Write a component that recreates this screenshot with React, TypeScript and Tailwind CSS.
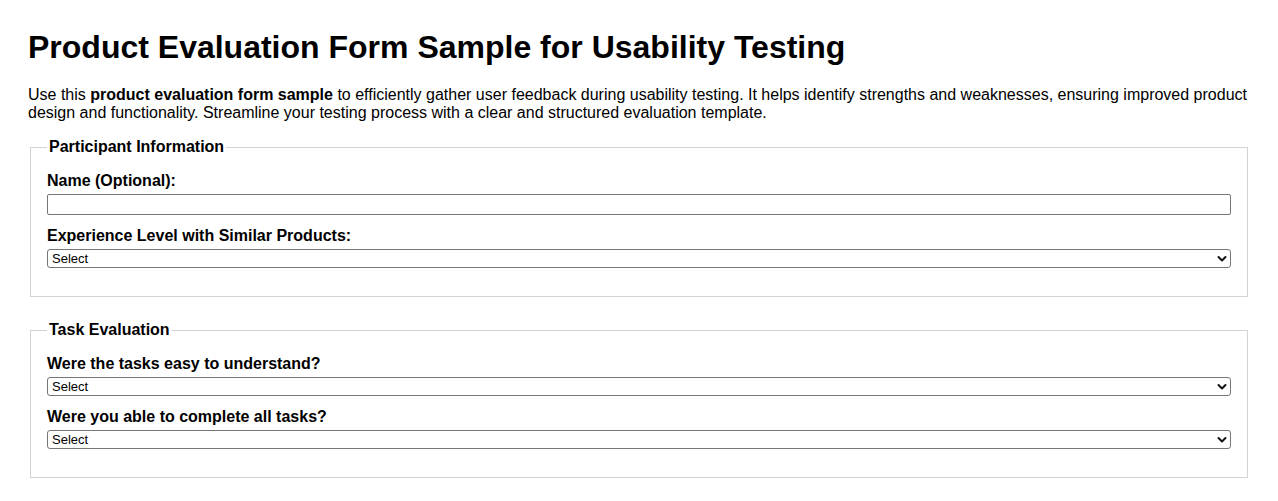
import React from "react";

function Chevron() {
  return (
    <svg
      className="pointer-events-none absolute right-[4px] top-1/2 -translate-y-1/2"
      width="10"
      height="7"
      viewBox="0 0 10 7"
    >
      <path d="M1.5 1.5 L5 5 L8.5 1.5" fill="none" stroke="#111" strokeWidth="2" strokeLinecap="round" strokeLinejoin="round" />
    </svg>
  );
}

function Select() {
  return (
    <div className="relative">
      <select className="block h-[19px] w-full appearance-none rounded-[3px] border border-[#767676] bg-white pl-[4px] text-[13px] leading-[15px] text-black">
        <option>Select</option>
      </select>
      <Chevron />
    </div>
  );
}

function Field({ label, children }: { label: string; children: React.ReactNode }) {
  return (
    <div className="mb-[12px]">
      <label className="mb-[4px] block text-[16px] font-bold leading-[18px]">{label}</label>
      {children}
    </div>
  );
}

export default function App() {
  return (
    <div className="min-h-[501px] bg-white px-[28px] pt-[29px] text-black" style={{ fontFamily: '"Liberation Sans", Arial, sans-serif' }}>
      <h1 className="text-[32px] font-bold leading-[37px]">Product Evaluation Form Sample for Usability Testing</h1>
      <p className="mt-[20px] text-[16px] leading-[18px]">
        Use this <strong>product evaluation form sample</strong> to efficiently gather user feedback during usability testing. It
        helps identify strengths and weaknesses, ensuring improved product design and functionality. Streamline your testing
        process with a clear and structured evaluation template.
      </p>

      <fieldset className="mx-[2px] mt-[16px] border border-[#d3d3d3] px-[16px] pb-[16px] pt-[16px]">
        <legend className="px-[2px] text-[16px] font-bold leading-[18px]">Participant Information</legend>
        <Field label="Name (Optional):">
          <input type="text" className="block h-[21px] w-full rounded-[2px] border border-[#767676] bg-white" />
        </Field>
        <Field label="Experience Level with Similar Products:">
          <Select />
        </Field>
      </fieldset>

      <fieldset className="mx-[2px] mt-[24px] border border-[#d3d3d3] px-[16px] pb-[16px] pt-[16px]">
        <legend className="px-[2px] text-[16px] font-bold leading-[18px]">Task Evaluation</legend>
        <Field label="Were the tasks easy to understand?">
          <Select />
        </Field>
        <Field label="Were you able to complete all tasks?">
          <Select />
        </Field>
      </fieldset>
    </div>
  );
}
